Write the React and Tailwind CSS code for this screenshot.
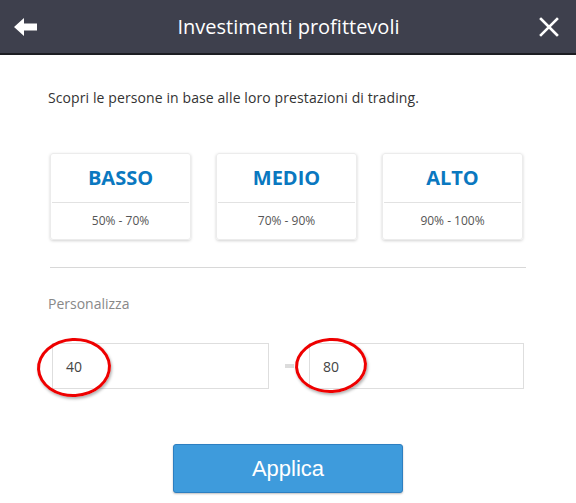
import React from 'react';

const ranges = [
	{ id: 1, label: 'BASSO', range: '50% - 70%' },
	{ id: 2, label: 'MEDIO', range: '70% - 90%' },
	{ id: 3, label: 'ALTO', range: '90% - 100%' }
];

function BackArrow() {
	return (
		<svg width="24" height="20" viewBox="0 0 24 20">
			<polygon points="0,10 10,1 10,6.5 23,6.5 23,13.5 10,13.5 10,19" fill="#fff" />
		</svg>
	);
}

function CloseIcon() {
	return (
		<svg width="20" height="20" viewBox="0 0 20 20">
			<path d="M2 2 L18 18 M18 2 L2 18" stroke="#fff" strokeWidth="2.6" strokeLinecap="square" />
		</svg>
	);
}

export default function App() {
	return (
		<div className="w-[576px] h-[503px] bg-white overflow-hidden font-['Open_Sans',sans-serif]">
			<div className="h-[55px] bg-[#3e404d] border-b-2 border-[#1c1d22] flex items-center justify-between pl-[14px] pr-[17px]">
				<BackArrow />
				<div className="text-white text-[20px] leading-none">Investimenti profittevoli</div>
				<CloseIcon />
			</div>

			<div className="px-[50px]">
				<p className="mt-[33px] -ml-[2px] text-[14px] leading-[20px] text-[#333] tracking-[0.1px]">
					Scopri le persone in base alle loro prestazioni di trading.
				</p>

				<div className="mt-[45px] flex gap-[25px]">
					{ranges.map((r) => (
						<div
							key={r.id}
							className="w-[141px] h-[87px] rounded-[3px] border border-[#ececec] shadow-[0_1px_3px_rgba(0,0,0,0.18)] flex flex-col"
						>
							<div className="h-[49px] flex items-center justify-center border-b border-[#e2e2e2] mx-[1px] text-[#0a78c0] text-[20px] font-bold">
								{r.label}
							</div>
							<div className="flex-1 flex items-center justify-center text-[12px] text-[#555]">{r.range}</div>
						</div>
					))}
				</div>

				<div className="mt-[27px] border-t border-[#d8d8d8]" />

				<p className="mt-[26px] -ml-[2px] text-[14px] leading-[20px] text-[#888]">Personalizza</p>

				<div className="relative mt-[29px] ml-[2px] flex items-center">
					<div className="w-[217px] h-[46px] border border-[#dedede] flex items-center pl-[13px] text-[14px] text-[#444]">
						40
					</div>
					<div className="w-[40px] flex justify-center">
						<div className="w-[9px] h-[4px] bg-[#dcdcdc]" />
					</div>
					<div className="w-[215px] h-[46px] border border-[#dedede] flex items-center pl-[13px] text-[14px] text-[#444]">
						80
					</div>
					<div className="absolute left-[-15px] top-[-5px] w-[74px] h-[59px] rounded-[50%] border-[3px] border-[#ee0000] shadow-[1px_2px_3px_rgba(0,0,0,0.3)] -rotate-3" />
					<div className="absolute left-[243px] top-[-5px] w-[72px] h-[55px] rounded-[50%] border-[3px] border-[#ee0000] shadow-[1px_2px_3px_rgba(0,0,0,0.3)] -rotate-3" />
				</div>
			</div>

			<button className="mt-[55px] mx-auto block w-[230px] h-[49px] rounded-[3px] bg-[#3e9bdc] border border-[#2d7fc1] shadow-[0_1px_2px_rgba(0,0,0,0.25)] text-white text-[22px] font-['Liberation_Sans',Arial,sans-serif]">
				Applica
			</button>
		</div>
	);
}
